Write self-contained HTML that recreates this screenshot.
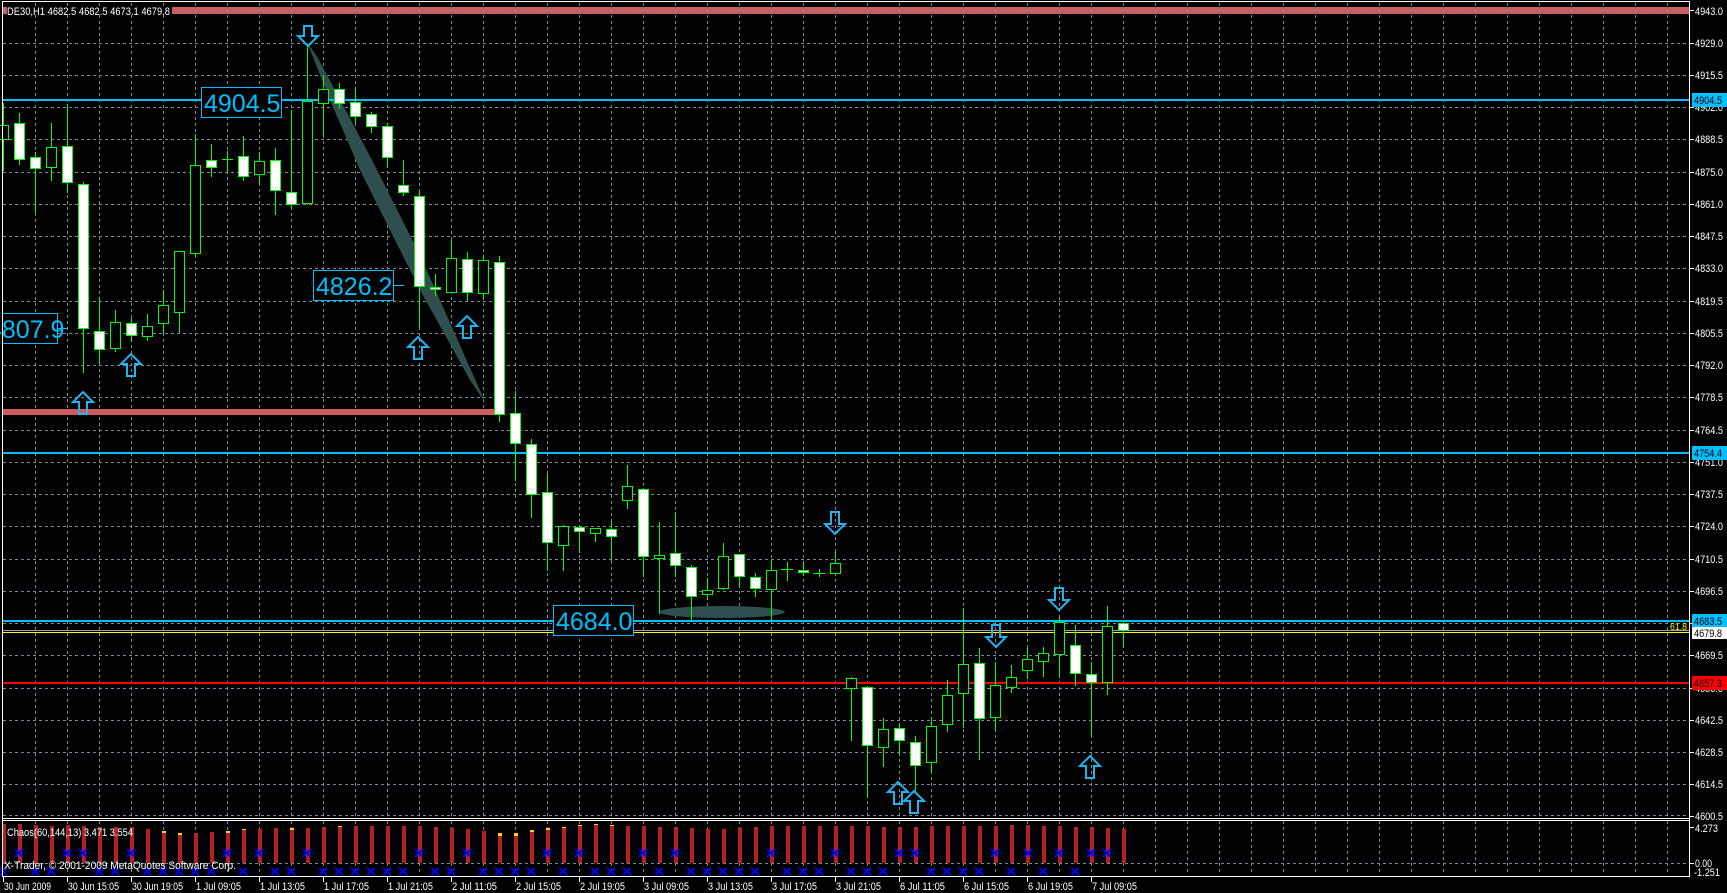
<!DOCTYPE html>
<html><head><meta charset="utf-8"><style>
html,body{margin:0;padding:0;background:#000;width:1727px;height:893px;overflow:hidden}
svg{display:block}
text{font-family:"Liberation Sans",sans-serif}
</style></head><body>
<svg width="1727" height="893" viewBox="0 0 1727 893" xmlns="http://www.w3.org/2000/svg" shape-rendering="crispEdges">
<rect width="1727" height="893" fill="#000"/>
<rect x="3" y="7" width="1686" height="7" fill="#cd5c5c"/>
<g stroke="#7a8898" stroke-width="1" stroke-dasharray="3,3">
<line x1="35.5" y1="3" x2="35.5" y2="818"/><line x1="67.5" y1="3" x2="67.5" y2="818"/><line x1="99.5" y1="3" x2="99.5" y2="818"/><line x1="131.5" y1="3" x2="131.5" y2="818"/><line x1="163.5" y1="3" x2="163.5" y2="818"/><line x1="195.5" y1="3" x2="195.5" y2="818"/><line x1="227.5" y1="3" x2="227.5" y2="818"/><line x1="259.5" y1="3" x2="259.5" y2="818"/><line x1="291.5" y1="3" x2="291.5" y2="818"/><line x1="323.5" y1="3" x2="323.5" y2="818"/><line x1="355.5" y1="3" x2="355.5" y2="818"/><line x1="387.5" y1="3" x2="387.5" y2="818"/><line x1="419.5" y1="3" x2="419.5" y2="818"/><line x1="451.5" y1="3" x2="451.5" y2="818"/><line x1="483.5" y1="3" x2="483.5" y2="818"/><line x1="515.5" y1="3" x2="515.5" y2="818"/><line x1="547.5" y1="3" x2="547.5" y2="818"/><line x1="579.5" y1="3" x2="579.5" y2="818"/><line x1="611.5" y1="3" x2="611.5" y2="818"/><line x1="643.5" y1="3" x2="643.5" y2="818"/><line x1="675.5" y1="3" x2="675.5" y2="818"/><line x1="707.5" y1="3" x2="707.5" y2="818"/><line x1="739.5" y1="3" x2="739.5" y2="818"/><line x1="771.5" y1="3" x2="771.5" y2="818"/><line x1="803.5" y1="3" x2="803.5" y2="818"/><line x1="835.5" y1="3" x2="835.5" y2="818"/><line x1="867.5" y1="3" x2="867.5" y2="818"/><line x1="899.5" y1="3" x2="899.5" y2="818"/><line x1="931.5" y1="3" x2="931.5" y2="818"/><line x1="963.5" y1="3" x2="963.5" y2="818"/><line x1="995.5" y1="3" x2="995.5" y2="818"/><line x1="1027.5" y1="3" x2="1027.5" y2="818"/><line x1="1059.5" y1="3" x2="1059.5" y2="818"/><line x1="1091.5" y1="3" x2="1091.5" y2="818"/><line x1="1123.5" y1="3" x2="1123.5" y2="818"/><line x1="1155.5" y1="3" x2="1155.5" y2="818"/><line x1="1187.5" y1="3" x2="1187.5" y2="818"/><line x1="1219.5" y1="3" x2="1219.5" y2="818"/><line x1="1251.5" y1="3" x2="1251.5" y2="818"/><line x1="1283.5" y1="3" x2="1283.5" y2="818"/><line x1="1315.5" y1="3" x2="1315.5" y2="818"/><line x1="1347.5" y1="3" x2="1347.5" y2="818"/><line x1="1379.5" y1="3" x2="1379.5" y2="818"/><line x1="1411.5" y1="3" x2="1411.5" y2="818"/><line x1="1443.5" y1="3" x2="1443.5" y2="818"/><line x1="1475.5" y1="3" x2="1475.5" y2="818"/><line x1="1507.5" y1="3" x2="1507.5" y2="818"/><line x1="1539.5" y1="3" x2="1539.5" y2="818"/><line x1="1571.5" y1="3" x2="1571.5" y2="818"/><line x1="1603.5" y1="3" x2="1603.5" y2="818"/><line x1="1635.5" y1="3" x2="1635.5" y2="818"/><line x1="1667.5" y1="3" x2="1667.5" y2="818"/>
<line x1="3" y1="10.5" x2="1689" y2="10.5"/><line x1="3" y1="43.5" x2="1689" y2="43.5"/><line x1="3" y1="75.5" x2="1689" y2="75.5"/><line x1="3" y1="107.5" x2="1689" y2="107.5"/><line x1="3" y1="139.5" x2="1689" y2="139.5"/><line x1="3" y1="172.5" x2="1689" y2="172.5"/><line x1="3" y1="204.5" x2="1689" y2="204.5"/><line x1="3" y1="236.5" x2="1689" y2="236.5"/><line x1="3" y1="268.5" x2="1689" y2="268.5"/><line x1="3" y1="301.5" x2="1689" y2="301.5"/><line x1="3" y1="333.5" x2="1689" y2="333.5"/><line x1="3" y1="365.5" x2="1689" y2="365.5"/><line x1="3" y1="397.5" x2="1689" y2="397.5"/><line x1="3" y1="430.5" x2="1689" y2="430.5"/><line x1="3" y1="462.5" x2="1689" y2="462.5"/><line x1="3" y1="494.5" x2="1689" y2="494.5"/><line x1="3" y1="526.5" x2="1689" y2="526.5"/><line x1="3" y1="559.5" x2="1689" y2="559.5"/><line x1="3" y1="591.5" x2="1689" y2="591.5"/><line x1="3" y1="623.5" x2="1689" y2="623.5"/><line x1="3" y1="655.5" x2="1689" y2="655.5"/><line x1="3" y1="688.5" x2="1689" y2="688.5"/><line x1="3" y1="720.5" x2="1689" y2="720.5"/><line x1="3" y1="752.5" x2="1689" y2="752.5"/><line x1="3" y1="784.5" x2="1689" y2="784.5"/><line x1="3" y1="815.5" x2="1689" y2="815.5"/>
<line x1="3" y1="863.5" x2="1689" y2="863.5"/>
</g>
<g stroke="#7a8898" stroke-width="1" stroke-dasharray="3,3">
<line x1="35.5" y1="821" x2="35.5" y2="875"/><line x1="67.5" y1="821" x2="67.5" y2="875"/><line x1="99.5" y1="821" x2="99.5" y2="875"/><line x1="131.5" y1="821" x2="131.5" y2="875"/><line x1="163.5" y1="821" x2="163.5" y2="875"/><line x1="195.5" y1="821" x2="195.5" y2="875"/><line x1="227.5" y1="821" x2="227.5" y2="875"/><line x1="259.5" y1="821" x2="259.5" y2="875"/><line x1="291.5" y1="821" x2="291.5" y2="875"/><line x1="323.5" y1="821" x2="323.5" y2="875"/><line x1="355.5" y1="821" x2="355.5" y2="875"/><line x1="387.5" y1="821" x2="387.5" y2="875"/><line x1="419.5" y1="821" x2="419.5" y2="875"/><line x1="451.5" y1="821" x2="451.5" y2="875"/><line x1="483.5" y1="821" x2="483.5" y2="875"/><line x1="515.5" y1="821" x2="515.5" y2="875"/><line x1="547.5" y1="821" x2="547.5" y2="875"/><line x1="579.5" y1="821" x2="579.5" y2="875"/><line x1="611.5" y1="821" x2="611.5" y2="875"/><line x1="643.5" y1="821" x2="643.5" y2="875"/><line x1="675.5" y1="821" x2="675.5" y2="875"/><line x1="707.5" y1="821" x2="707.5" y2="875"/><line x1="739.5" y1="821" x2="739.5" y2="875"/><line x1="771.5" y1="821" x2="771.5" y2="875"/><line x1="803.5" y1="821" x2="803.5" y2="875"/><line x1="835.5" y1="821" x2="835.5" y2="875"/><line x1="867.5" y1="821" x2="867.5" y2="875"/><line x1="899.5" y1="821" x2="899.5" y2="875"/><line x1="931.5" y1="821" x2="931.5" y2="875"/><line x1="963.5" y1="821" x2="963.5" y2="875"/><line x1="995.5" y1="821" x2="995.5" y2="875"/><line x1="1027.5" y1="821" x2="1027.5" y2="875"/><line x1="1059.5" y1="821" x2="1059.5" y2="875"/><line x1="1091.5" y1="821" x2="1091.5" y2="875"/><line x1="1123.5" y1="821" x2="1123.5" y2="875"/><line x1="1155.5" y1="821" x2="1155.5" y2="875"/><line x1="1187.5" y1="821" x2="1187.5" y2="875"/><line x1="1219.5" y1="821" x2="1219.5" y2="875"/><line x1="1251.5" y1="821" x2="1251.5" y2="875"/><line x1="1283.5" y1="821" x2="1283.5" y2="875"/><line x1="1315.5" y1="821" x2="1315.5" y2="875"/><line x1="1347.5" y1="821" x2="1347.5" y2="875"/><line x1="1379.5" y1="821" x2="1379.5" y2="875"/><line x1="1411.5" y1="821" x2="1411.5" y2="875"/><line x1="1443.5" y1="821" x2="1443.5" y2="875"/><line x1="1475.5" y1="821" x2="1475.5" y2="875"/><line x1="1507.5" y1="821" x2="1507.5" y2="875"/><line x1="1539.5" y1="821" x2="1539.5" y2="875"/><line x1="1571.5" y1="821" x2="1571.5" y2="875"/><line x1="1603.5" y1="821" x2="1603.5" y2="875"/><line x1="1635.5" y1="821" x2="1635.5" y2="875"/><line x1="1667.5" y1="821" x2="1667.5" y2="875"/>
</g>
<rect x="3" y="409" width="492" height="6" fill="#cd5c5c"/>
<g shape-rendering="auto" fill="#2f4f4f">
<polygon points="307,42 318,58 372,160 420,255 486,404 470,380 420,290 360,170 330,100"/>
<ellipse cx="722" cy="612" rx="63" ry="6"/>
</g>
<rect x="3" y="99" width="1686" height="2" fill="#00bfff"/>
<rect x="3" y="452" width="1686" height="2" fill="#00bfff"/>
<rect x="3" y="620" width="1686" height="2" fill="#00bfff"/>
<rect x="3" y="630" width="1686" height="1" fill="#a0a0a0"/>
<rect x="3" y="632" width="1686" height="1" fill="#ffff00"/>
<rect x="3" y="682" width="1686" height="2" fill="#ff0000"/>
<g stroke="#00ff00" stroke-width="1">
<line x1="3.5" y1="103" x2="3.5" y2="171"/><rect x="-1.5" y="125.5" width="10" height="14" fill="#000"/>
<line x1="19.5" y1="113" x2="19.5" y2="165"/><rect x="14.5" y="123.5" width="10" height="36" fill="#fff"/>
<line x1="35.5" y1="152" x2="35.5" y2="213"/><rect x="30.5" y="157.5" width="10" height="11" fill="#fff"/>
<line x1="51.5" y1="123" x2="51.5" y2="181"/><rect x="46.5" y="147.5" width="10" height="20" fill="#000"/>
<line x1="67.5" y1="104" x2="67.5" y2="193"/><rect x="62.5" y="146.5" width="10" height="36" fill="#fff"/>
<line x1="83.5" y1="182" x2="83.5" y2="373"/><rect x="78.5" y="184.5" width="10" height="144" fill="#fff"/>
<line x1="99.5" y1="297" x2="99.5" y2="364"/><rect x="94.5" y="331.5" width="10" height="18" fill="#fff"/>
<line x1="115.5" y1="310" x2="115.5" y2="352"/><rect x="110.5" y="322.5" width="10" height="26" fill="#000"/>
<line x1="131.5" y1="318" x2="131.5" y2="342"/><rect x="126.5" y="323.5" width="10" height="12" fill="#fff"/>
<line x1="147.5" y1="314" x2="147.5" y2="341"/><rect x="142.5" y="326.5" width="10" height="10" fill="#000"/>
<line x1="163.5" y1="290" x2="163.5" y2="334"/><rect x="158.5" y="305.5" width="10" height="18" fill="#000"/>
<line x1="179.5" y1="251" x2="179.5" y2="333"/><rect x="174.5" y="251.5" width="10" height="61" fill="#000"/>
<line x1="195.5" y1="134" x2="195.5" y2="257"/><rect x="190.5" y="165.5" width="10" height="88" fill="#000"/>
<line x1="211.5" y1="144" x2="211.5" y2="177"/><rect x="206.5" y="160.5" width="10" height="7" fill="#fff"/>
<line x1="227.5" y1="151" x2="227.5" y2="173"/><line x1="222" y1="159.5" x2="233" y2="159.5"/>
<line x1="243.5" y1="136" x2="243.5" y2="181"/><rect x="238.5" y="156.5" width="10" height="20" fill="#fff"/>
<line x1="259.5" y1="152" x2="259.5" y2="184"/><rect x="254.5" y="161.5" width="10" height="13" fill="#000"/>
<line x1="275.5" y1="148" x2="275.5" y2="215"/><rect x="270.5" y="160.5" width="10" height="30" fill="#fff"/>
<line x1="291.5" y1="110" x2="291.5" y2="209"/><rect x="286.5" y="192.5" width="10" height="12" fill="#fff"/>
<line x1="307.5" y1="44" x2="307.5" y2="205"/><rect x="302.5" y="101.5" width="10" height="102" fill="#000"/>
<line x1="323.5" y1="75" x2="323.5" y2="136"/><rect x="318.5" y="89.5" width="10" height="14" fill="#000"/>
<line x1="339.5" y1="83" x2="339.5" y2="109"/><rect x="334.5" y="89.5" width="10" height="14" fill="#fff"/>
<line x1="355.5" y1="87" x2="355.5" y2="123"/><rect x="350.5" y="102.5" width="10" height="14" fill="#fff"/>
<line x1="371.5" y1="112" x2="371.5" y2="133"/><rect x="366.5" y="114.5" width="10" height="12" fill="#fff"/>
<line x1="387.5" y1="123" x2="387.5" y2="167"/><rect x="382.5" y="126.5" width="10" height="31" fill="#fff"/>
<line x1="403.5" y1="160" x2="403.5" y2="196"/><rect x="398.5" y="185.5" width="10" height="7" fill="#fff"/>
<line x1="419.5" y1="190" x2="419.5" y2="328"/><rect x="414.5" y="196.5" width="10" height="90" fill="#fff"/>
<line x1="435.5" y1="274" x2="435.5" y2="296"/><rect x="430.5" y="287.5" width="10" height="2" fill="#fff"/>
<line x1="451.5" y1="240" x2="451.5" y2="293"/><rect x="446.5" y="258.5" width="10" height="34" fill="#000"/>
<line x1="467.5" y1="252" x2="467.5" y2="301"/><rect x="462.5" y="259.5" width="10" height="33" fill="#fff"/>
<line x1="483.5" y1="255" x2="483.5" y2="299"/><rect x="478.5" y="260.5" width="10" height="33" fill="#000"/>
<line x1="499.5" y1="256" x2="499.5" y2="422"/><rect x="494.5" y="262.5" width="10" height="152" fill="#fff"/>
<line x1="515.5" y1="391" x2="515.5" y2="481"/><rect x="510.5" y="413.5" width="10" height="30" fill="#fff"/>
<line x1="531.5" y1="439" x2="531.5" y2="518"/><rect x="526.5" y="444.5" width="10" height="50" fill="#fff"/>
<line x1="547.5" y1="474" x2="547.5" y2="571"/><rect x="542.5" y="492.5" width="10" height="50" fill="#fff"/>
<line x1="563.5" y1="525" x2="563.5" y2="571"/><rect x="558.5" y="526.5" width="10" height="19" fill="#000"/>
<line x1="579.5" y1="526" x2="579.5" y2="553"/><rect x="574.5" y="527.5" width="10" height="4" fill="#fff"/>
<line x1="595.5" y1="528" x2="595.5" y2="542"/><rect x="590.5" y="528.5" width="10" height="5" fill="#000"/>
<line x1="611.5" y1="522" x2="611.5" y2="561"/><rect x="606.5" y="529.5" width="10" height="7" fill="#fff"/>
<line x1="627.5" y1="465" x2="627.5" y2="509"/><rect x="622.5" y="486.5" width="10" height="14" fill="#000"/>
<line x1="643.5" y1="488" x2="643.5" y2="577"/><rect x="638.5" y="489.5" width="10" height="67" fill="#fff"/>
<line x1="659.5" y1="522" x2="659.5" y2="614"/><rect x="654.5" y="555.5" width="10" height="3" fill="#000"/>
<line x1="675.5" y1="512" x2="675.5" y2="577"/><rect x="670.5" y="553.5" width="10" height="12" fill="#fff"/>
<line x1="691.5" y1="565" x2="691.5" y2="620"/><rect x="686.5" y="567.5" width="10" height="29" fill="#fff"/>
<line x1="707.5" y1="578" x2="707.5" y2="600"/><rect x="702.5" y="590.5" width="10" height="4" fill="#000"/>
<line x1="723.5" y1="543" x2="723.5" y2="590"/><rect x="718.5" y="556.5" width="10" height="32" fill="#000"/>
<line x1="739.5" y1="554" x2="739.5" y2="587"/><rect x="734.5" y="554.5" width="10" height="22" fill="#fff"/>
<line x1="755.5" y1="573" x2="755.5" y2="597"/><rect x="750.5" y="577.5" width="10" height="11" fill="#fff"/>
<line x1="771.5" y1="560" x2="771.5" y2="620"/><rect x="766.5" y="570.5" width="10" height="19" fill="#000"/>
<line x1="787.5" y1="562" x2="787.5" y2="581"/><line x1="781" y1="569.5" x2="793" y2="569.5"/>
<line x1="803.5" y1="562" x2="803.5" y2="576"/><rect x="798.5" y="570.5" width="10" height="2" fill="#fff"/>
<line x1="819.5" y1="569" x2="819.5" y2="577"/><line x1="813" y1="573.5" x2="825" y2="573.5"/>
<line x1="835.5" y1="552" x2="835.5" y2="573"/><rect x="830.5" y="563.5" width="10" height="10" fill="#000"/>
<line x1="851.5" y1="677" x2="851.5" y2="741"/><rect x="846.5" y="678.5" width="10" height="10" fill="#000"/>
<line x1="867.5" y1="686" x2="867.5" y2="798"/><rect x="862.5" y="687.5" width="10" height="58" fill="#fff"/>
<line x1="883.5" y1="718" x2="883.5" y2="767"/><rect x="878.5" y="729.5" width="10" height="18" fill="#000"/>
<line x1="899.5" y1="723" x2="899.5" y2="754"/><rect x="894.5" y="728.5" width="10" height="12" fill="#fff"/>
<line x1="915.5" y1="736" x2="915.5" y2="793"/><rect x="910.5" y="742.5" width="10" height="23" fill="#fff"/>
<line x1="931.5" y1="717" x2="931.5" y2="772"/><rect x="926.5" y="726.5" width="10" height="36" fill="#000"/>
<line x1="947.5" y1="680" x2="947.5" y2="732"/><rect x="942.5" y="695.5" width="10" height="29" fill="#000"/>
<line x1="963.5" y1="608" x2="963.5" y2="728"/><rect x="958.5" y="664.5" width="10" height="29" fill="#000"/>
<line x1="979.5" y1="648" x2="979.5" y2="760"/><rect x="974.5" y="663.5" width="10" height="55" fill="#fff"/>
<line x1="995.5" y1="662" x2="995.5" y2="731"/><rect x="990.5" y="685.5" width="10" height="32" fill="#000"/>
<line x1="1011.5" y1="665" x2="1011.5" y2="693"/><rect x="1006.5" y="677.5" width="10" height="10" fill="#000"/>
<line x1="1027.5" y1="648" x2="1027.5" y2="679"/><rect x="1022.5" y="659.5" width="10" height="11" fill="#000"/>
<line x1="1043.5" y1="647" x2="1043.5" y2="677"/><rect x="1038.5" y="653.5" width="10" height="8" fill="#000"/>
<line x1="1059.5" y1="617" x2="1059.5" y2="677"/><rect x="1054.5" y="622.5" width="10" height="32" fill="#000"/>
<line x1="1075.5" y1="625" x2="1075.5" y2="686"/><rect x="1070.5" y="645.5" width="10" height="28" fill="#fff"/>
<line x1="1091.5" y1="662" x2="1091.5" y2="737"/><rect x="1086.5" y="674.5" width="10" height="8" fill="#fff"/>
<line x1="1107.5" y1="606" x2="1107.5" y2="695"/><rect x="1102.5" y="626.5" width="10" height="56" fill="#000"/>
<line x1="1123.5" y1="627" x2="1123.5" y2="647"/><rect x="1118.5" y="623.5" width="10" height="7" fill="#fff"/>
</g>
<g fill="none" stroke="#1eb4f0" stroke-width="2" shape-rendering="auto">
<polygon points="83,392 93,402 87,402 87,414 79,414 79,402 73,402"/>
<polygon points="131,354 141,364 135,364 135,376 127,376 127,364 121,364"/>
<polygon points="418,337 428,347 422,347 422,359 414,359 414,347 408,347"/>
<polygon points="467,316 477,326 471,326 471,338 463,338 463,326 457,326"/>
<polygon points="898,782 908,792 902,792 902,804 894,804 894,792 888,792"/>
<polygon points="914,791 924,801 918,801 918,813 910,813 910,801 904,801"/>
<polygon points="1090,756 1100,766 1094,766 1094,778 1086,778 1086,766 1080,766"/>
<polygon points="308,46 318,36 312,36 312,26 304,26 304,36 298,36"/>
<polygon points="835,534 845,524 839,524 839,512 831,512 831,524 825,524"/>
<polygon points="1059,610 1069,600 1063,600 1063,588 1055,588 1055,600 1049,600"/>
<polygon points="996,647 1006,637 1000,637 1000,625 992,625 992,637 986,637"/>
</g>
<g fill="#000" stroke="#00bfff" stroke-width="1">
<rect x="201.5" y="87.5" width="80" height="30"/>
<rect x="2.5" y="313.5" width="55" height="30"/>
<rect x="313.5" y="270.5" width="80" height="30"/>
<rect x="553.5" y="605.5" width="80" height="30"/>
<line x1="58" y1="328.5" x2="67" y2="328.5"/>
<line x1="394" y1="285.5" x2="404" y2="285.5"/>
</g>
<g fill="#00bfff" font-size="25">
<text x="204" y="112">4904.5</text>
<text x="-12" y="338">4807.9</text>
<text x="316" y="295">4826.2</text>
<text x="556" y="630">4684.0</text>
</g>
<g fill="#b22222">
<rect x="2" y="824" width="4" height="39"/><rect x="18" y="824" width="4" height="39"/><rect x="34" y="825" width="4" height="38"/><rect x="50" y="826" width="4" height="37"/><rect x="66" y="825" width="4" height="38"/><rect x="82" y="826" width="4" height="37"/><rect x="98" y="827" width="4" height="36"/><rect x="114" y="827" width="4" height="36"/><rect x="130" y="827" width="4" height="36"/><rect x="146" y="829" width="4" height="34"/><rect x="162" y="831" width="4" height="32"/><rect x="178" y="833" width="4" height="30"/><rect x="194" y="833" width="4" height="30"/><rect x="210" y="832" width="4" height="31"/><rect x="226" y="831" width="4" height="32"/><rect x="242" y="829" width="4" height="34"/><rect x="258" y="829" width="4" height="34"/><rect x="274" y="828" width="4" height="35"/><rect x="290" y="828" width="4" height="35"/><rect x="306" y="828" width="4" height="35"/><rect x="322" y="827" width="4" height="36"/><rect x="338" y="826" width="4" height="37"/><rect x="354" y="826" width="4" height="37"/><rect x="370" y="826" width="4" height="37"/><rect x="386" y="826" width="4" height="37"/><rect x="402" y="826" width="4" height="37"/><rect x="418" y="826" width="4" height="37"/><rect x="434" y="827" width="4" height="36"/><rect x="450" y="828" width="4" height="35"/><rect x="466" y="829" width="4" height="34"/><rect x="482" y="831" width="4" height="32"/><rect x="498" y="833" width="4" height="30"/><rect x="514" y="833" width="4" height="30"/><rect x="530" y="830" width="4" height="33"/><rect x="546" y="828" width="4" height="35"/><rect x="562" y="827" width="4" height="36"/><rect x="578" y="825" width="4" height="38"/><rect x="594" y="824" width="4" height="39"/><rect x="610" y="825" width="4" height="38"/><rect x="626" y="826" width="4" height="37"/><rect x="642" y="826" width="4" height="37"/><rect x="658" y="827" width="4" height="36"/><rect x="674" y="827" width="4" height="36"/><rect x="690" y="828" width="4" height="35"/><rect x="706" y="829" width="4" height="34"/><rect x="722" y="829" width="4" height="34"/><rect x="738" y="828" width="4" height="35"/><rect x="754" y="827" width="4" height="36"/><rect x="770" y="826" width="4" height="37"/><rect x="786" y="826" width="4" height="37"/><rect x="802" y="826" width="4" height="37"/><rect x="818" y="826" width="4" height="37"/><rect x="834" y="826" width="4" height="37"/><rect x="850" y="826" width="4" height="37"/><rect x="866" y="826" width="4" height="37"/><rect x="882" y="827" width="4" height="36"/><rect x="898" y="827" width="4" height="36"/><rect x="914" y="827" width="4" height="36"/><rect x="930" y="826" width="4" height="37"/><rect x="946" y="826" width="4" height="37"/><rect x="962" y="826" width="4" height="37"/><rect x="978" y="826" width="4" height="37"/><rect x="994" y="826" width="4" height="37"/><rect x="1010" y="825" width="4" height="38"/><rect x="1026" y="825" width="4" height="38"/><rect x="1042" y="826" width="4" height="37"/><rect x="1058" y="826" width="4" height="37"/><rect x="1074" y="827" width="4" height="36"/><rect x="1090" y="827" width="4" height="36"/><rect x="1106" y="828" width="4" height="35"/><rect x="1122" y="829" width="4" height="34"/>
</g>
<g fill="#ffd700">
<rect x="162" y="831" width="4" height="2"/><rect x="178" y="833" width="4" height="2"/><rect x="226" y="831" width="4" height="2"/><rect x="242" y="829" width="4" height="1"/><rect x="290" y="828" width="4" height="2"/><rect x="338" y="826" width="4" height="1"/><rect x="498" y="833" width="4" height="3"/><rect x="514" y="833" width="4" height="3"/><rect x="530" y="830" width="4" height="2"/><rect x="546" y="828" width="4" height="2"/><rect x="562" y="827" width="4" height="1"/><rect x="578" y="825" width="4" height="1"/><rect x="594" y="824" width="4" height="1"/><rect x="610" y="825" width="4" height="1"/>
</g>
<g stroke="#0000ff" stroke-width="2" shape-rendering="auto">
<path d="M15,849l8,8M23,849l-8,8M63,849l8,8M71,849l-8,8M79,849l8,8M87,849l-8,8M127,849l8,8M135,849l-8,8M223,849l8,8M231,849l-8,8M255,849l8,8M263,849l-8,8M303,849l8,8M311,849l-8,8M415,849l8,8M423,849l-8,8M463,849l8,8M471,849l-8,8M543,849l8,8M551,849l-8,8M575,849l8,8M583,849l-8,8M639,849l8,8M647,849l-8,8M671,849l8,8M679,849l-8,8M767,849l8,8M775,849l-8,8M831,849l8,8M839,849l-8,8M895,849l8,8M903,849l-8,8M911,849l8,8M919,849l-8,8M991,849l8,8M999,849l-8,8M1024,849l8,8M1032,849l-8,8M1055,849l8,8M1063,849l-8,8M1087,849l8,8M1095,849l-8,8M1103,849l8,8M1111,849l-8,8"/>
<path d="M0,868l7,7M7,868l-7,7M31,868l8,7M39,868l-8,7M47,868l8,7M55,868l-8,7M95,868l8,7M103,868l-8,7M111,868l8,7M119,868l-8,7M143,868l8,7M151,868l-8,7M159,868l8,7M167,868l-8,7M175,868l8,7M183,868l-8,7M191,868l8,7M199,868l-8,7M207,868l8,7M215,868l-8,7M239,868l8,7M247,868l-8,7M271,868l8,7M279,868l-8,7M287,868l8,7M295,868l-8,7M319,868l8,7M327,868l-8,7M335,868l8,7M343,868l-8,7M351,868l8,7M359,868l-8,7M367,868l8,7M375,868l-8,7M383,868l8,7M391,868l-8,7M399,868l8,7M407,868l-8,7M431,868l8,7M439,868l-8,7M447,868l8,7M455,868l-8,7M479,868l8,7M487,868l-8,7M495,868l8,7M503,868l-8,7M511,868l8,7M519,868l-8,7M527,868l8,7M535,868l-8,7M559,868l8,7M567,868l-8,7M591,868l8,7M599,868l-8,7M607,868l8,7M615,868l-8,7M623,868l8,7M631,868l-8,7M655,868l8,7M663,868l-8,7M687,868l8,7M695,868l-8,7M703,868l8,7M711,868l-8,7M719,868l8,7M727,868l-8,7M735,868l8,7M743,868l-8,7M751,868l8,7M759,868l-8,7M783,868l8,7M791,868l-8,7M799,868l8,7M807,868l-8,7M815,868l8,7M823,868l-8,7M847,868l8,7M855,868l-8,7M863,868l8,7M871,868l-8,7M879,868l8,7M887,868l-8,7M927,868l8,7M935,868l-8,7M943,868l8,7M951,868l-8,7M959,868l8,7M967,868l-8,7M975,868l8,7M983,868l-8,7M1007,868l8,7M1015,868l-8,7M1039,868l8,7M1047,868l-8,7M1071,868l8,7M1079,868l-8,7"/>
</g>
<g stroke="#fff" stroke-width="1" fill="none">
<line x1="2.5" y1="1" x2="2.5" y2="877"/>
<line x1="2" y1="1.5" x2="1690" y2="1.5"/>
<line x1="1689.5" y1="1" x2="1689.5" y2="877"/>
<line x1="2" y1="818.5" x2="1690" y2="818.5"/>
<line x1="2" y1="820.5" x2="1690" y2="820.5"/>
<line x1="2" y1="876.5" x2="1690" y2="876.5"/>
</g>
<rect x="7" y="6" width="165" height="9" fill="#000"/>
<text x="7" y="15" font-size="11" fill="#fff" textLength="163" lengthAdjust="spacingAndGlyphs">DE30,H1  4682.5 4682.5 4673.1 4679.8</text>
<text x="7" y="836" font-size="11" fill="#fff" textLength="126" lengthAdjust="spacingAndGlyphs">Chaos(60,144,13) 3.471 3.554</text>
<text x="4" y="869" font-size="11" fill="#fff" textLength="232" lengthAdjust="spacingAndGlyphs">X-Trader, © 2001-2009 MetaQuotes Software Corp.</text>
<g stroke="#fff"><path d="M1690,10.5h4M1690,43.5h4M1690,75.5h4M1690,107.5h4M1690,139.5h4M1690,172.5h4M1690,204.5h4M1690,236.5h4M1690,268.5h4M1690,301.5h4M1690,333.5h4M1690,365.5h4M1690,397.5h4M1690,430.5h4M1690,462.5h4M1690,494.5h4M1690,526.5h4M1690,559.5h4M1690,591.5h4M1690,623.5h4M1690,655.5h4M1690,688.5h4M1690,720.5h4M1690,752.5h4M1690,784.5h4M1690,816.5h4M1690,827.5h4M1690,863.5h4"/></g>
<g fill="#fff" font-size="11">
<text x="1695" y="15" textLength="28" lengthAdjust="spacingAndGlyphs">4943.0</text><text x="1695" y="47" textLength="28" lengthAdjust="spacingAndGlyphs">4929.0</text><text x="1695" y="79" textLength="28" lengthAdjust="spacingAndGlyphs">4915.5</text><text x="1695" y="111" textLength="28" lengthAdjust="spacingAndGlyphs">4902.0</text><text x="1695" y="143" textLength="28" lengthAdjust="spacingAndGlyphs">4888.5</text><text x="1695" y="176" textLength="28" lengthAdjust="spacingAndGlyphs">4875.0</text><text x="1695" y="208" textLength="28" lengthAdjust="spacingAndGlyphs">4861.0</text><text x="1695" y="240" textLength="28" lengthAdjust="spacingAndGlyphs">4847.5</text><text x="1695" y="272" textLength="28" lengthAdjust="spacingAndGlyphs">4833.0</text><text x="1695" y="305" textLength="28" lengthAdjust="spacingAndGlyphs">4819.5</text><text x="1695" y="337" textLength="28" lengthAdjust="spacingAndGlyphs">4805.5</text><text x="1695" y="369" textLength="28" lengthAdjust="spacingAndGlyphs">4792.0</text><text x="1695" y="401" textLength="28" lengthAdjust="spacingAndGlyphs">4778.5</text><text x="1695" y="434" textLength="28" lengthAdjust="spacingAndGlyphs">4764.5</text><text x="1695" y="466" textLength="28" lengthAdjust="spacingAndGlyphs">4751.0</text><text x="1695" y="498" textLength="28" lengthAdjust="spacingAndGlyphs">4737.5</text><text x="1695" y="530" textLength="28" lengthAdjust="spacingAndGlyphs">4724.0</text><text x="1695" y="563" textLength="28" lengthAdjust="spacingAndGlyphs">4710.5</text><text x="1695" y="595" textLength="28" lengthAdjust="spacingAndGlyphs">4696.5</text><text x="1695" y="659" textLength="28" lengthAdjust="spacingAndGlyphs">4669.5</text><text x="1695" y="692" textLength="28" lengthAdjust="spacingAndGlyphs">4656.0</text><text x="1695" y="724" textLength="28" lengthAdjust="spacingAndGlyphs">4642.5</text><text x="1695" y="756" textLength="28" lengthAdjust="spacingAndGlyphs">4628.5</text><text x="1695" y="788" textLength="28" lengthAdjust="spacingAndGlyphs">4614.5</text><text x="1695" y="820" textLength="28" lengthAdjust="spacingAndGlyphs">4600.5</text>
<text x="1695" y="832" textLength="23" lengthAdjust="spacingAndGlyphs">4.273</text><text x="1695" y="867" textLength="17" lengthAdjust="spacingAndGlyphs">0.00</text><text x="1694" y="876" textLength="26" lengthAdjust="spacingAndGlyphs">-1.251</text>
</g>
<rect x="1692" y="93" width="35" height="14" fill="#00bfff"/><text x="1694" y="104" font-size="11" fill="#000" textLength="28" lengthAdjust="spacingAndGlyphs">4904.5</text>
<rect x="1692" y="446" width="35" height="14" fill="#00bfff"/><text x="1694" y="457" font-size="11" fill="#000" textLength="28" lengthAdjust="spacingAndGlyphs">4754.4</text>
<rect x="1692" y="614" width="35" height="13" fill="#00bfff"/><text x="1694" y="625" font-size="11" fill="#000" textLength="28" lengthAdjust="spacingAndGlyphs">4683.5</text>
<rect x="1692" y="627" width="35" height="12" fill="#fff"/><text x="1694" y="637" font-size="11" fill="#000" textLength="28" lengthAdjust="spacingAndGlyphs">4679.8</text>
<rect x="1692" y="676" width="35" height="14" fill="#ff0000"/><text x="1694" y="687" font-size="11" fill="#000" textLength="28" lengthAdjust="spacingAndGlyphs">4657.3</text>
<text x="1670" y="630" font-size="10" fill="#ffff00" textLength="17" lengthAdjust="spacingAndGlyphs">61.8</text>
<g stroke="#fff"><path d="M3.5,877v5M67.5,877v5M131.5,877v5M195.5,877v5M259.5,877v5M323.5,877v5M387.5,877v5M451.5,877v5M515.5,877v5M579.5,877v5M643.5,877v5M707.5,877v5M771.5,877v5M835.5,877v5M899.5,877v5M963.5,877v5M1027.5,877v5M1091.5,877v5"/></g>
<g fill="#fff" font-size="11">
<text x="4" y="890" textLength="47" lengthAdjust="spacingAndGlyphs">30 Jun 2009</text><text x="68" y="890" textLength="51" lengthAdjust="spacingAndGlyphs">30 Jun 15:05</text><text x="132" y="890" textLength="51" lengthAdjust="spacingAndGlyphs">30 Jun 19:05</text><text x="196" y="890" textLength="45" lengthAdjust="spacingAndGlyphs">1 Jul 09:05</text><text x="260" y="890" textLength="45" lengthAdjust="spacingAndGlyphs">1 Jul 13:05</text><text x="324" y="890" textLength="45" lengthAdjust="spacingAndGlyphs">1 Jul 17:05</text><text x="388" y="890" textLength="45" lengthAdjust="spacingAndGlyphs">1 Jul 21:05</text><text x="452" y="890" textLength="45" lengthAdjust="spacingAndGlyphs">2 Jul 11:05</text><text x="516" y="890" textLength="45" lengthAdjust="spacingAndGlyphs">2 Jul 15:05</text><text x="580" y="890" textLength="45" lengthAdjust="spacingAndGlyphs">2 Jul 19:05</text><text x="644" y="890" textLength="45" lengthAdjust="spacingAndGlyphs">3 Jul 09:05</text><text x="708" y="890" textLength="45" lengthAdjust="spacingAndGlyphs">3 Jul 13:05</text><text x="772" y="890" textLength="45" lengthAdjust="spacingAndGlyphs">3 Jul 17:05</text><text x="836" y="890" textLength="45" lengthAdjust="spacingAndGlyphs">3 Jul 21:05</text><text x="900" y="890" textLength="45" lengthAdjust="spacingAndGlyphs">6 Jul 11:05</text><text x="964" y="890" textLength="45" lengthAdjust="spacingAndGlyphs">6 Jul 15:05</text><text x="1028" y="890" textLength="45" lengthAdjust="spacingAndGlyphs">6 Jul 19:05</text><text x="1092" y="890" textLength="45" lengthAdjust="spacingAndGlyphs">7 Jul 09:05</text>
</g>
</svg>
</body></html>
